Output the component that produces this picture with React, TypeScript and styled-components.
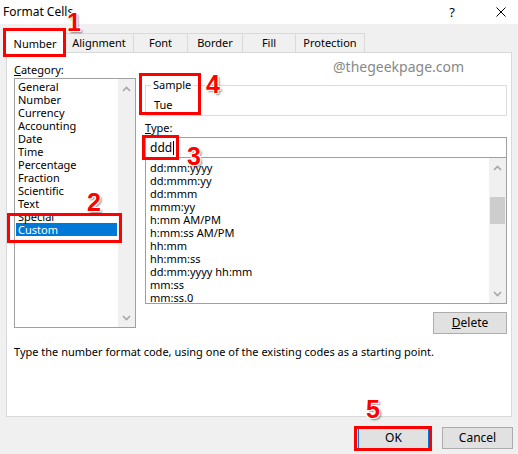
import React from "react";
import styled, {createGlobalStyle} from "styled-components";

const GlobalStyle = createGlobalStyle`
  body {
    margin: 0;
    background: #f0f0f0;
  }
  * {
    box-sizing: border-box;
  }
`

const categories = [
    'General', 'Number', 'Currency', 'Accounting', 'Date', 'Time',
    'Percentage', 'Fraction', 'Scientific', 'Text', 'Special', 'Custom',
]

const formats = [
    'dd:mm:yyyy', 'dd:mmm:yy', 'dd:mmm', 'mmm:yy', 'h:mm AM/PM', 'h:mm:ss AM/PM',
    'hh:mm', 'hh:mm:ss', 'dd:mm:yyyy hh:mm', 'mm:ss', 'mm:ss.0',
]

const tabs = [
    {label: 'Number', width: 60},
    {label: 'Alignment', width: 69},
    {label: 'Font', width: 54},
    {label: 'Border', width: 55},
    {label: 'Fill', width: 53},
    {label: 'Protection', width: 69},
]

const Chevron = ({up}: { up?: boolean }) => (
    <svg width="9" height="6" viewBox="0 0 9 6">
        <polyline
            points={up ? '1,5 4.5,1.5 8,5' : '1,1 4.5,4.5 8,1'}
            fill="none"
            stroke="#a6a6a6"
            strokeWidth="1.6"
        />
    </svg>
)

export default function App() {
    return (
        <Window>
            <GlobalStyle/>
            <TitleBar>
                <Title>Format Cells</Title>
                <TitleButtons>
                    <TitleButton>?</TitleButton>
                    <TitleButton>
                        <svg width="10" height="10" viewBox="0 0 10 10">
                            <path d="M0.5 0.5 L9.5 9.5 M9.5 0.5 L0.5 9.5" stroke="#000" strokeWidth="1"/>
                        </svg>
                    </TitleButton>
                </TitleButtons>
            </TitleBar>

            <TabRow>
                {tabs.map((t, i) => (
                    <Tab key={t.label} $width={t.width} $active={i === 0}>{t.label}</Tab>
                ))}
            </TabRow>

            <Panel>
                <Columns>
                    <Column>
                        <FieldLabel><u>C</u>ategory:</FieldLabel>
                        <CategoryBox>
                            <Items>
                                {categories.map(c => (
                                    <CategoryItem key={c} $selected={c === 'Custom'}>{c}</CategoryItem>
                                ))}
                            </Items>
                            <ScrollBar>
                                <Chevron up/>
                                <Chevron/>
                            </ScrollBar>
                        </CategoryBox>
                    </Column>

                    <Column>
                        <SampleGroup>
                            <SampleLegend>Sample</SampleLegend>
                            <SampleValue>Tue</SampleValue>
                        </SampleGroup>
                        <FieldLabel $top={4}><u>T</u>ype:</FieldLabel>
                        <TypeInput>ddd<Caret/></TypeInput>
                        <FormatBox>
                            <FormatItems>
                                {formats.map(f => (
                                    <FormatItem key={f}>{f}</FormatItem>
                                ))}
                            </FormatItems>
                            <ScrollBar>
                                <Chevron up/>
                                <Thumb/>
                                <Chevron/>
                            </ScrollBar>
                        </FormatBox>
                        <DeleteRow>
                            <Button $width={74}><u>D</u>elete</Button>
                        </DeleteRow>
                    </Column>
                </Columns>
                <Description>
                    Type the number format code, using one of the existing codes as a starting point.
                </Description>
            </Panel>

            <Footer>
                <Button $width={71} $default>OK</Button>
                <Button $width={71}>Cancel</Button>
            </Footer>

            <Watermark>@thegeekpage.com</Watermark>

            <RedBox $x={3} $y={28} $w={63} $h={29}/>
            <RedBox $x={7} $y={213} $w={115} $h={30}/>
            <RedBox $x={142} $y={135} $w={37} $h={25}/>
            <RedBox $x={139} $y={73} $w={62} $h={42}/>
            <RedBox $x={354} $y={426} $w={78} $h={25}/>

            <StepNumber $x={67} $y={10}>1</StepNumber>
            <StepNumber $x={87} $y={190}>2</StepNumber>
            <StepNumber $x={187} $y={144}>3</StepNumber>
            <StepNumber $x={206} $y={72}>4</StepNumber>
            <StepNumber $x={366} $y={397}>5</StepNumber>
        </Window>
    )
}

const Window = styled.div`
  position: relative;
  width: 518px;
  height: 454px;
  overflow: hidden;
  display: flex;
  flex-direction: column;
  background: #f0f0f0;
  font-family: "Noto Sans", "Open Sans", sans-serif;
  font-size: 11px;
  color: #000;
`

const TitleBar = styled.div`
  height: 24px;
  flex: none;
  display: flex;
  align-items: center;
  padding: 0 2px 0 3px;
  background: #fff;
`

const Title = styled.span`
  font-size: 12px;
  line-height: 16px;
`

const TitleButtons = styled.div`
  margin-left: auto;
  display: flex;
  gap: 19px;
`

const TitleButton = styled.div`
  width: 30px;
  height: 20px;
  display: flex;
  align-items: center;
  justify-content: center;
  font-size: 13px;
`

const TabRow = styled.div`
  height: 28px;
  flex: none;
  display: flex;
  align-items: flex-end;
  padding-left: 5px;
`

const Tab = styled.div<{ $width: number, $active?: boolean }>`
  position: relative;
  width: ${p => p.$width}px;
  height: ${p => p.$active ? 25 : 19}px;
  margin-bottom: ${p => p.$active ? -1 : 0}px;
  z-index: ${p => p.$active ? 1 : 0};
  display: flex;
  align-items: flex-end;
  justify-content: center;
  padding-bottom: 1px;
  line-height: 16px;
  background: ${p => p.$active ? '#fff' : '#f0f0f0'};
  border: 1px solid #d9d9d9;
  border-bottom: none;
  border-left: ${p => p.$active ? '1px solid #d9d9d9' : 'none'};
`

const Panel = styled.div`
  height: 365px;
  flex: none;
  margin: 0 6px;
  padding: 9px 4px 0 7px;
  background: #fff;
  border: 1px solid #d9d9d9;
`

const Columns = styled.div`
  display: grid;
  grid-template-columns: 122px 362px;
  column-gap: 9px;
  align-items: start;
`

const Column = styled.div`
  display: flex;
  flex-direction: column;
`

const FieldLabel = styled.div<{ $top?: number }>`
  height: 16px;
  line-height: 16px;
  margin-top: ${p => p.$top || 0}px;
`

const CategoryBox = styled.div`
  height: 250px;
  display: flex;
  border: 1px solid #a0a0a0;
`

const Items = styled.div`
  flex: 1;
  padding-top: 1px;
`

const CategoryItem = styled.div<{ $selected?: boolean }>`
  height: 13px;
  line-height: 13px;
  margin: 0 1px;
  padding-left: 2px;
  white-space: nowrap;
  background: ${p => p.$selected ? '#0078d7' : 'transparent'};
  color: ${p => p.$selected ? '#fff' : '#000'};
`

const ScrollBar = styled.div`
  width: 17px;
  flex: none;
  display: flex;
  flex-direction: column;
  align-items: center;
  justify-content: space-between;
  padding: 7px 0 6px;
  background: #f0f0f0;
`

const Thumb = styled.div`
  width: 15px;
  height: 27px;
  margin-top: 26px;
  margin-bottom: auto;
  background: #cdcdcd;
`

const SampleGroup = styled.fieldset`
  margin: 16px 0 0;
  padding: 0 0 2px 5px;
  border: 1px solid #dcdcdc;
  min-width: 0;
`

const SampleLegend = styled.legend`
  padding: 0 2px;
  line-height: 14px;
`

const SampleValue = styled.div`
  margin-top: 5px;
  padding-left: 3px;
  line-height: 16px;
`

const TypeInput = styled.div`
  height: 21px;
  margin-top: 1px;
  display: flex;
  align-items: center;
  padding-left: 4px;
  border: 1px solid #a0a0a0;
  font-size: 12px;
  line-height: 16px;
`

const Caret = styled.span`
  width: 1px;
  height: 14px;
  margin-left: 1px;
  background: #000;
`

const FormatBox = styled.div`
  height: 146px;
  display: flex;
  border: 1px solid #a0a0a0;
  border-top: none;
`

const FormatItems = styled.div`
  flex: 1;
  padding: 3px 0 0 4px;
`

const FormatItem = styled.div`
  height: 13px;
  line-height: 13px;
  white-space: nowrap;
`

const DeleteRow = styled.div`
  display: flex;
  justify-content: flex-end;
  margin-top: 8px;
`

const Button = styled.div<{ $width: number, $default?: boolean }>`
  width: ${p => p.$width}px;
  height: 22px;
  display: flex;
  align-items: center;
  justify-content: center;
  background: #e1e1e1;
  border: 1px solid ${p => p.$default ? '#0078d7' : '#adadad'};
  font-size: 12px;
  line-height: 16px;
`

const Description = styled.div`
  margin-top: 10px;
  line-height: 16px;
  white-space: nowrap;
`

const Footer = styled.div`
  display: flex;
  justify-content: flex-end;
  gap: 13px;
  padding: 10px 5px 0 0;
`

const Watermark = styled.div`
  position: absolute;
  left: 333px;
  top: 58px;
  font-size: 14px;
  line-height: 18px;
  color: #888;
`

const RedBox = styled.div<{ $x: number, $y: number, $w: number, $h: number }>`
  position: absolute;
  left: ${p => p.$x}px;
  top: ${p => p.$y}px;
  width: ${p => p.$w}px;
  height: ${p => p.$h}px;
  border: 3px solid #ff0000;
  z-index: 2;
`

const StepNumber = styled.span<{ $x: number, $y: number }>`
  position: absolute;
  left: ${p => p.$x}px;
  top: ${p => p.$y}px;
  z-index: 3;
  font-family: "Liberation Sans", Arial, sans-serif;
  font-weight: bold;
  font-size: 25px;
  line-height: 25px;
  color: #ff0000;
  text-shadow: -1px -1px 0 #fff, 1px -1px 0 #fff, -1px 1px 0 #fff, 1px 1px 0 #fff,
    2px 2px 2px rgba(0, 0, 0, 0.45);
`
